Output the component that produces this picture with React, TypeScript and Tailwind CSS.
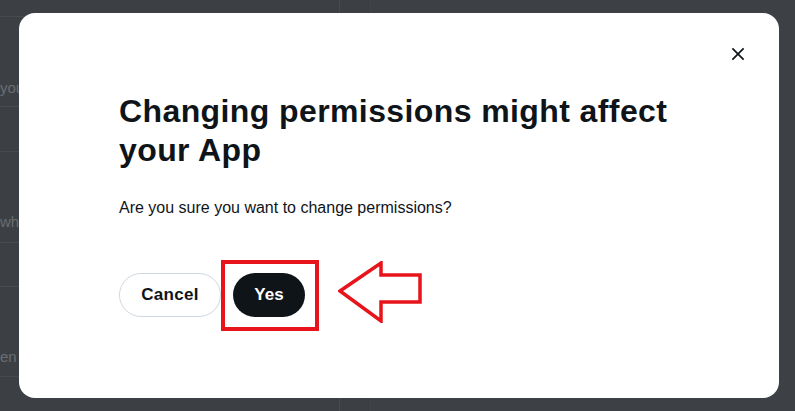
import React from "react";

const font = { fontFamily: '"Liberation Sans", Arial, sans-serif' };

const BackdropRow: React.FC<{ className: string; text?: string }> = ({ className, text }) => (
	<div className={`border-b border-[#474b50] text-[15px] leading-5 text-[#696d72] ${className}`}>{text}</div>
);

const CloseIcon = () => (
	<svg viewBox="0 0 24 24" className="h-5 w-5 fill-[#0f1419]">
		<path d="M10.59 12L4.54 5.96l1.42-1.42L12 10.59l6.04-6.05 1.42 1.42L13.41 12l6.05 6.04-1.42 1.42L12 13.41l-6.04 6.05-1.42-1.42L10.59 12z" />
	</svg>
);

const ArrowLeft = () => (
	<svg width="84" height="62" viewBox="0 0 84 62" className="ml-[19px] mt-[1px] shrink-0">
		<polygon
			points="2,30 43,2 43,14 82,14 82,41 43,41 43,60"
			fill="none"
			stroke="#e8141c"
			strokeWidth="3.5"
			strokeLinejoin="miter"
		/>
	</svg>
);

export default function App() {
	return (
		<div className="relative h-[411px] w-[795px] overflow-hidden bg-[#3c4044]" style={font}>
			{/* dimmed page behind the dialog */}
			<div className="flex h-full">
				<div className="flex w-[340px] flex-col border-r border-[#474b50]">
					<BackdropRow className="h-[17px]" />
					<BackdropRow className="h-[90px] pt-[61px]" text="you" />
					<BackdropRow className="h-[45px]" />
					<BackdropRow className="h-[91px] pt-[60px]" text="whe" />
					<BackdropRow className="h-[44px]" />
					<BackdropRow className="h-[90px] pt-[60px]" text="en" />
				</div>
				<div className="w-[31px] border-r border-[#42464b]" />
				<div className="flex-1 bg-[#3d4146]" />
			</div>

			{/* dialog */}
			<div className="absolute inset-0 pl-[19px] pr-[16px] pt-[13px]">
				<div className="flex h-[385px] w-[760px] flex-col rounded-2xl bg-white pt-[24px]">
					<div className="flex justify-end pr-[24px]">
						<button className="flex h-[34px] w-[34px] items-center justify-center rounded-full">
							<CloseIcon />
						</button>
					</div>

					<div className="flex flex-col px-[100px]">
						<h1 className="mt-[21px] text-[32px] font-bold leading-[39px] tracking-[0.4px] text-[#0f1419]">
							Changing permissions might affect your App
						</h1>
						<p className="mt-[28px] text-[16px] leading-5 text-[#0f1419]">
							Are you sure you want to change permissions?
						</p>

						<div className="mt-[42px] flex items-start">
							<button className="mt-[13px] flex h-[44px] w-[102px] items-center justify-center rounded-full border border-[#cfd9de] text-[17px] font-bold tracking-[0.3px] text-[#0f1419]">
								Cancel
							</button>
							<div className="border-4 border-[#e8141c] pb-[10px] pl-[8px] pr-[10px] pt-[9px]">
								<button className="flex h-[44px] w-[72px] items-center justify-center rounded-full bg-[#0f1419] text-[17px] font-bold text-white">
									Yes
								</button>
							</div>
							<ArrowLeft />
						</div>
					</div>
				</div>
			</div>
		</div>
	);
}
